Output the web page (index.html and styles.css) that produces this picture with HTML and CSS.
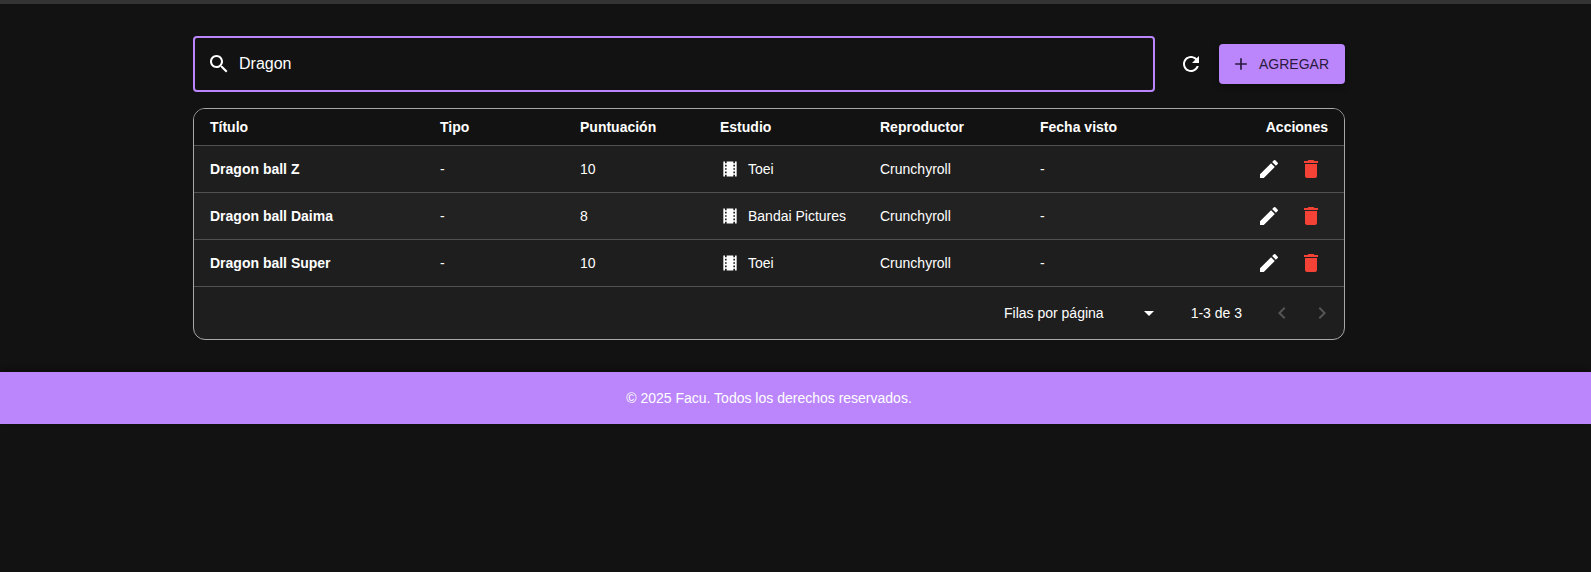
FILE: index.html
```html
<!DOCTYPE html>
<html>
<head>
    <title>Animes</title>
    <meta charset="UTF-8">
    <link rel="stylesheet" href="styles.css">
</head>

<body>
    <svg class="icon-defs">
        <symbol id="i-search" viewBox="0 0 24 24"><path d="M15.5 14h-.79l-.28-.27C15.41 12.59 16 11.11 16 9.5 16 5.91 13.09 3 9.5 3S3 5.91 3 9.5 5.91 16 9.5 16c1.61 0 3.09-.59 4.23-1.57l.27.28v.79l5 4.99L20.49 19l-4.99-5zm-6 0C7.01 14 5 11.99 5 9.5S7.01 5 9.5 5 14 7.01 14 9.5 11.99 14 9.5 14z"/></symbol>
        <symbol id="i-refresh" viewBox="0 0 24 24"><path d="M17.65 6.35C16.2 4.9 14.21 4 12 4c-4.42 0-7.99 3.58-7.99 8s3.57 8 7.99 8c3.73 0 6.84-2.55 7.73-6h-2.08c-.82 2.33-3.04 4-5.65 4-3.31 0-6-2.69-6-6s2.69-6 6-6c1.66 0 3.14.69 4.22 1.78L13 11h7V4l-2.35 2.35z"/></symbol>
        <symbol id="i-add" viewBox="0 0 24 24"><path d="M19 13h-6v6h-2v-6H5v-2h6V5h2v6h6v2z"/></symbol>
        <symbol id="i-movie" viewBox="0 0 24 24"><path d="M18 3v2h-2V3H8v2H6V3H4v18h2v-2h2v2h8v-2h2v2h2V3h-2zM8 17H6v-2h2v2zm0-4H6v-2h2v2zm0-4H6V7h2v2zm10 8h-2v-2h2v2zm0-4h-2v-2h2v2zm0-4h-2V7h2v2z"/></symbol>
        <symbol id="i-edit" viewBox="0 0 24 24"><path d="M3 17.25V21h3.75L17.81 9.94l-3.75-3.75L3 17.25zM20.71 7.04c.39-.39.39-1.02 0-1.41l-2.34-2.34a.9959.9959 0 0 0-1.41 0l-1.83 1.83 3.75 3.75 1.83-1.83z"/></symbol>
        <symbol id="i-delete" viewBox="0 0 24 24"><path d="M6 19c0 1.1.9 2 2 2h8c1.1 0 2-.9 2-2V7H6v12zM19 4h-3.5l-1-1h-5l-1 1H5v2h14V4z"/></symbol>
        <symbol id="i-drop" viewBox="0 0 24 24"><path d="M7 10l5 5 5-5z"/></symbol>
        <symbol id="i-prev" viewBox="0 0 24 24"><path d="M15.41 7.41 14 6l-6 6 6 6 1.41-1.41L10.83 12z"/></symbol>
        <symbol id="i-next" viewBox="0 0 24 24"><path d="M10 6 8.59 7.41 13.17 12l-4.58 4.58L10 18l6-6z"/></symbol>
    </svg>

    <div class="topbar"></div>

    <main class="content">
        <div class="toolbar">
            <label class="search">
                <svg class="icon"><use href="#i-search"/></svg>
                <input type="text" value="Dragon">
            </label>
            <button type="button" class="refresh-btn"><svg class="icon"><use href="#i-refresh"/></svg></button>
            <button type="button" class="add-btn"><svg class="icon"><use href="#i-add"/></svg>AGREGAR</button>
        </div>

        <div class="card">
            <table class="anime-table">
                <colgroup>
                    <col class="col-title">
                    <col class="col-type">
                    <col class="col-score">
                    <col class="col-studio">
                    <col class="col-player">
                    <col class="col-date">
                    <col>
                </colgroup>
                <thead>
                    <tr>
                        <th>Título</th>
                        <th>Tipo</th>
                        <th>Puntuación</th>
                        <th>Estudio</th>
                        <th>Reproductor</th>
                        <th>Fecha visto</th>
                        <th class="right">Acciones</th>
                    </tr>
                </thead>
                <tbody>
                    <tr>
                        <td class="name">Dragon ball Z</td>
                        <td>-</td>
                        <td>10</td>
                        <td><span class="studio"><svg class="icon"><use href="#i-movie"/></svg>Toei</span></td>
                        <td>Crunchyroll</td>
                        <td>-</td>
                        <td class="right"><span class="actions"><svg class="icon"><use href="#i-edit"/></svg><svg class="icon red"><use href="#i-delete"/></svg></span></td>
                    </tr>
                    <tr class="alt">
                        <td class="name">Dragon ball Daima</td>
                        <td>-</td>
                        <td>8</td>
                        <td><span class="studio"><svg class="icon"><use href="#i-movie"/></svg>Bandai Pictures</span></td>
                        <td>Crunchyroll</td>
                        <td>-</td>
                        <td class="right"><span class="actions"><svg class="icon"><use href="#i-edit"/></svg><svg class="icon red"><use href="#i-delete"/></svg></span></td>
                    </tr>
                    <tr>
                        <td class="name">Dragon ball Super</td>
                        <td>-</td>
                        <td>10</td>
                        <td><span class="studio"><svg class="icon"><use href="#i-movie"/></svg>Toei</span></td>
                        <td>Crunchyroll</td>
                        <td>-</td>
                        <td class="right"><span class="actions"><svg class="icon"><use href="#i-edit"/></svg><svg class="icon red"><use href="#i-delete"/></svg></span></td>
                    </tr>
                </tbody>
            </table>
            <div class="pager">
                <span class="rows-label">Filas por página</span>
                <svg class="icon drop"><use href="#i-drop"/></svg>
                <span class="range">1-3 de 3</span>
                <svg class="icon muted"><use href="#i-prev"/></svg>
                <svg class="icon muted"><use href="#i-next"/></svg>
            </div>
        </div>
    </main>

    <footer class="site-footer">© 2025 Facu. Todos los derechos reservados.</footer>
</body>
</html>
```

FILE: styles.css
```css
* {
    box-sizing: border-box;
}

html, body {
    height: 100%;
}

body {
    margin: 0;
    background-color: #121212;
    color: #fff;
    font-family: "Liberation Sans", Arial, sans-serif;
    font-size: 14px;
}

.icon-defs {
    display: none;
}

.icon {
    display: block;
    width: 24px;
    height: 24px;
    fill: currentColor;
    flex: none;
}

.topbar {
    height: 4px;
    background-color: #333;
}

.content {
    width: 1152px;
    margin-left: 193px;
    padding-top: 32px;
    height: 368px;
}

/* search row */
.toolbar {
    display: flex;
    align-items: center;
    height: 56px;
}

.search {
    display: flex;
    align-items: center;
    gap: 8px;
    width: 963px;
    height: 56px;
    padding: 0 12px;
    border: 2px solid #bb86fc;
    border-radius: 4px;
}

.search input {
    flex: 1;
    border: none;
    outline: none;
    padding: 0;
    background: none;
    color: #fff;
    font-family: inherit;
    font-size: 16px;
}

.refresh-btn {
    display: flex;
    margin-left: 16px;
    padding: 8px;
    border: none;
    background: none;
    color: #fff;
}

.add-btn {
    display: flex;
    align-items: center;
    gap: 8px;
    width: 126px;
    height: 40px;
    margin-left: 8px;
    padding: 0 16px 0 12px;
    border: none;
    border-radius: 4px;
    background-color: #bb86fc;
    color: #2a1a3e;
    font-family: inherit;
    font-size: 14px;
    box-shadow: 0 3px 6px rgba(0, 0, 0, 0.3);
}

.add-btn .icon {
    width: 20px;
    height: 20px;
}

/* table */
.card {
    margin-top: 16px;
    border: 1px solid #a8a8a8;
    border-radius: 12px;
    overflow: hidden;
    background-color: #1e1e1e;
}

.anime-table {
    width: 100%;
    border-collapse: collapse;
    table-layout: fixed;
}

.col-title { width: 230px; }
.col-type { width: 140px; }
.col-score { width: 140px; }
.col-studio { width: 160px; }
.col-player { width: 160px; }
.col-date { width: 160px; }

.anime-table th {
    height: 36px;
    padding: 0 16px;
    background-color: #121212;
    text-align: left;
    font-weight: 700;
    border-bottom: 1px solid #515151;
}

.anime-table td {
    height: 47px;
    padding: 0 16px;
    border-bottom: 1px solid #515151;
}

.anime-table .right {
    text-align: right;
}

.anime-table .name {
    font-weight: 700;
}

.alt td {
    background-color: #222;
}

.studio {
    display: flex;
    align-items: center;
    gap: 8px;
}

.studio .icon {
    width: 20px;
    height: 20px;
}

.actions {
    display: inline-flex;
    gap: 18px;
    vertical-align: middle;
    margin-right: 5px;
}

.red {
    color: #f44336;
}

/* pagination */
.pager {
    display: flex;
    align-items: center;
    height: 52px;
    padding-right: 10px;
}

.rows-label {
    margin-left: auto;
}

.drop {
    margin-left: 33px;
}

.range {
    margin: 0 28px 0 30px;
}

.muted {
    color: #555;
    margin-right: 16px;
}

.muted:last-child {
    margin-right: 0;
}

.site-footer {
    height: 52px;
    padding-right: 53px;
    background-color: #bb86fc;
    color: #fff;
    line-height: 52px;
    text-align: center;
    box-shadow: 0 -2px 6px rgba(0, 0, 0, 0.4);
}
```
